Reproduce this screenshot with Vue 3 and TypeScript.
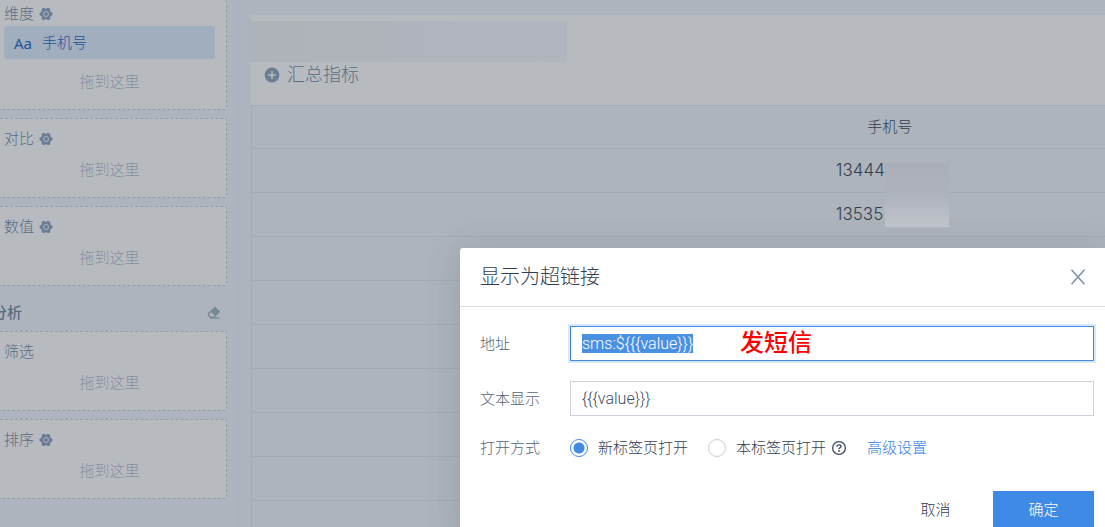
<script setup lang="ts">
import { onMounted, ref } from 'vue'

interface Zone {
  title: string
  gear: boolean
  field?: string
}

const dataZones: Zone[] = [
  { title: '维度', gear: true, field: '手机号' },
  { title: '对比', gear: true },
  { title: '数值', gear: true },
]
const analysisZones: Zone[] = [
  { title: '筛选', gear: false },
  { title: '排序', gear: true },
]
const groups = [
  { heading: '', zones: dataZones },
  { heading: '分析', zones: analysisZones },
]

const phones = ['13444', '13535']
const emptyRows = 7

const address = ref('sms:${{{value}}}')
const display = ref('{{{value}}}')
const target = ref('new')
const addressInput = ref<HTMLInputElement | null>(null)

onMounted(() => {
  addressInput.value?.focus()
  addressInput.value?.select()
})
</script>

<template>
  <div class="page">
    <aside class="sidebar">
      <section v-for="group in groups" :key="group.heading" class="group">
        <header v-if="group.heading" class="group-head">
          <h2>{{ group.heading }}</h2>
          <button type="button" class="icon-button" aria-label="清空">
            <svg width="14" height="14" viewBox="0 0 14 14">
              <path d="M8 1.6 L12.2 5.6 L8.6 9.2 L4.4 5.2 Z" fill="#788897" stroke="#788897" stroke-width="1.6" stroke-linejoin="round" />
              <path d="M4.2 5.2 L1.7 7.6 Q.9 8.5 1.7 9.5 L3.6 11.4 H6.8 L8.6 9.8" fill="none" stroke="#788897" stroke-width="1.4" />
              <path d="M3.4 12 H12.6" stroke="#788897" stroke-width="1.4" />
            </svg>
          </button>
        </header>
        <div v-for="zone in group.zones" :key="zone.title" class="zone" :class="{ filled: zone.field }">
          <div class="zone-title">
            <span>{{ zone.title }}</span>
            <svg v-if="zone.gear" width="14" height="14" viewBox="0 0 14 14">
              <path
                d="M2.5 7 H11.5 M4.7 3 L9.3 11 M9.3 3 L4.7 11"
                stroke="#6b7d95"
                stroke-width="4.2"
                stroke-linecap="round"
              />
              <circle cx="7" cy="7" r="5.2" fill="#6b7d95" />
              <circle cx="7" cy="7" r="2.5" fill="none" stroke="#abb2bb" stroke-width="1" />
            </svg>
          </div>
          <div v-if="zone.field" class="field"><span class="kind">Aa</span>{{ zone.field }}</div>
          <div class="hint">拖到这里</div>
        </div>
      </section>
    </aside>

    <main class="content">
      <div class="masked-title"></div>
      <button type="button" class="summary">
        <svg width="16" height="16" viewBox="0 0 16 16">
          <circle cx="8" cy="8" r="7.4" fill="#6c7e94" />
          <path d="M8 4 V12 M4 8 H12" stroke="#b7bbc0" stroke-width="1.5" />
        </svg>
        汇总指标
      </button>
      <table class="grid">
        <thead>
          <tr><th scope="col">手机号</th></tr>
        </thead>
        <tbody>
          <tr v-for="(phone, i) in phones" :key="phone">
            <td>
              <span class="phone">{{ phone }}<i v-if="i === 0" class="mask"></i></span>
            </td>
          </tr>
          <tr v-for="n in emptyRows" :key="n"><td></td></tr>
        </tbody>
      </table>
    </main>

    <div class="dialog" role="dialog" aria-labelledby="dialog-title">
      <header class="dialog-head">
        <h1 id="dialog-title">显示为超链接</h1>
        <button type="button" class="icon-button" aria-label="关闭">
          <svg width="16" height="16" viewBox="0 0 16 16">
            <path d="M1.5 .8 L14.5 15.2 M14.5 .8 L1.5 15.2" stroke="#8093ad" stroke-width="1.6" />
          </svg>
        </button>
      </header>
      <form class="dialog-body" @submit.prevent>
        <div class="row">
          <label for="address">地址</label>
          <div class="control">
            <input id="address" ref="addressInput" v-model="address" type="text" spellcheck="false" />
            <span class="note">发短信</span>
          </div>
        </div>
        <div class="row">
          <label for="display">文本显示</label>
          <div class="control">
            <input id="display" v-model="display" type="text" spellcheck="false" />
          </div>
        </div>
        <div class="row options" role="radiogroup" aria-labelledby="target-label">
          <span id="target-label" class="row-label">打开方式</span>
          <label class="choice"><input v-model="target" type="radio" name="target" value="new" />新标签页打开</label>
          <label class="choice"><input v-model="target" type="radio" name="target" value="self" />本标签页打开</label>
          <svg class="help" width="16" height="16" viewBox="0 0 16 16">
            <circle cx="8" cy="8" r="6.4" fill="none" stroke="#3f4b5f" stroke-width="1.3" />
            <path d="M6 6.7 Q6 4.9 8 4.9 Q10 4.9 10 6.5 Q10 7.3 8.9 7.9 Q8 8.4 8 9.3" fill="none" stroke="#3f4b5f" stroke-width="1.4" />
            <circle cx="8" cy="11" r=".9" fill="#3f4b5f" />
          </svg>
          <a href="#advanced">高级设置</a>
        </div>
        <footer class="actions">
          <button type="button" class="cancel">取消</button>
          <button type="submit" class="confirm">确定</button>
        </footer>
      </form>
    </div>
  </div>
</template>

<style>
body {
  overflow: hidden;
}
</style>

<style scoped>
.page {
  position: relative;
  display: flex;
  height: 100vh;
  overflow: hidden;
  background: #aeb4be;
  color: #333e50;
  font-family: Inter, "Noto Sans CJK SC", sans-serif;
  font-size: 15px;
  font-weight: 300;
  line-height: 22px;
}

.page * {
  box-sizing: border-box;
}

button,
input {
  font: inherit;
  color: inherit;
}

button {
  padding: 0;
  border: 0;
  background: none;
}

h1,
h2 {
  margin: 0;
}

svg {
  display: block;
  flex: none;
}

.icon-button {
  display: flex;
}

.sidebar {
  flex: none;
  width: 239px;
  padding-right: 11px;
  border-right: 1px solid #abb1bc;
}

.group {
  display: flex;
  flex-direction: column;
  gap: 8px;
}

.group-head {
  display: flex;
  align-items: center;
  justify-content: space-between;
  height: 37px;
  padding: 16px 6px 0 0;
}

.group-head h2 {
  margin-left: -8px;
  color: #5a6b82;
  font-size: 15px;
  font-weight: 500;
}

.zone {
  padding: 9px 11px 16px 4px;
  border: 1px dashed #959ca6;
  border-left: 0;
  border-radius: 0 3px 3px 0;
  background: #b7bbc0;
}

.zone.filled {
  padding-top: 3px;
  border-top: 0;
}

.zone-title {
  display: flex;
  align-items: center;
  gap: 5px;
  color: #5b6b80;
}

.field {
  display: flex;
  align-items: center;
  height: 33px;
  margin: 1px 0 12px;
  padding-left: 10px;
  border-radius: 3px;
  background: #a1aebe;
  color: #24549a;
}

.kind {
  width: 28px;
  font-family: "Noto Sans", sans-serif;
  font-weight: 400;
}

.hint {
  margin-top: 9px;
  color: #8790a1;
  text-align: center;
}

.field + .hint {
  margin-top: 0;
}

.content {
  flex: 1;
  min-width: 0;
  margin: 15px 0 0 12px;
  overflow: hidden;
  background: #b7bbc0;
}

.masked-title {
  width: 37%;
  height: 41px;
  margin-top: 6px;
  background: linear-gradient(90deg, #aeb3ba, #b0b5bd 60%, #b1b5be);
}

.summary {
  display: flex;
  align-items: center;
  gap: 7px;
  height: 26px;
  margin-bottom: 17px;
  padding-left: 13px;
  color: #586b83;
  font-size: 18px;
}

.grid {
  width: 149.6%;
  border-collapse: collapse;
  background: #adb4bc;
}

.grid th,
.grid td {
  height: 44px;
  padding: 0;
  border: 1px solid #a0abb8;
  font-weight: 300;
  text-align: center;
}

.grid th {
  height: 43px;
}

.phone {
  position: relative;
  display: inline-block;
  width: 108px;
  font-size: 17px;
  text-align: left;
}

.mask {
  position: absolute;
  top: 4px;
  left: 49px;
  width: 64px;
  height: 64px;
  background: linear-gradient(#a9aeb7, #aeb2bb 50%, #c2c5cc);
}

.dialog {
  position: absolute;
  top: 248px;
  right: 0;
  left: 460px;
  border-radius: 3px 0 0 0;
  background: #fff;
  box-shadow: 0 4px 36px rgba(60, 72, 88, 0.2);
}

.dialog-head {
  display: flex;
  align-items: center;
  justify-content: space-between;
  height: 59px;
  padding: 0 19px 0 20px;
  border-bottom: 1px solid #d9dce6;
}

.dialog-head h1 {
  font-size: 20px;
  font-weight: 300;
}

.dialog-body {
  display: flex;
  flex-direction: column;
  gap: 20px;
  padding: 19px 11px 12px 20px;
}

.row {
  display: flex;
  align-items: center;
}

.row > label,
.row-label {
  flex: none;
  width: 90px;
  color: #566377;
}

.control {
  position: relative;
  flex: 1;
}

.control input {
  display: block;
  width: 100%;
  height: 35px;
  padding: 0 11px;
  border: 1px solid #cdd2de;
  outline: none;
  background: #fff;
  color: #3f4b5f;
  font-family: Roboto, "Noto Sans CJK SC", sans-serif;
  font-size: 16px;
}

.control input:focus {
  border-color: #3f8ae2;
  box-shadow: 0 0 0 2px #d8e7fb;
}

.control input::selection {
  background: #4a90e2;
  color: #fff;
}

.note {
  position: absolute;
  top: 0;
  left: 170px;
  color: #f00;
  font-size: 24px;
  font-weight: 500;
  line-height: 34px;
  pointer-events: none;
}

.options {
  height: 24px;
}

.row > .choice {
  display: flex;
  align-items: center;
  gap: 10px;
  width: auto;
  margin-right: 20px;
  color: #333f53;
}

.row > .choice + .choice {
  margin-right: 5px;
}

.choice input {
  appearance: none;
  width: 18px;
  height: 18px;
  margin: 0;
  border: 1px solid #c9cede;
  border-radius: 50%;
  background: #fff;
}

.choice input:checked {
  border-color: #3f8ae8;
  background: radial-gradient(circle, #3f8ae8 5px, #fff 6px);
}

.options a {
  margin-left: 20px;
  color: #2f80e4;
  text-decoration: none;
}

.actions {
  display: flex;
  justify-content: flex-end;
  gap: 7px;
  margin-top: 11px;
}

.actions button {
  width: 101px;
  height: 38px;
}

.actions .confirm {
  background: #3f8ae6;
  color: #fff;
}
</style>
